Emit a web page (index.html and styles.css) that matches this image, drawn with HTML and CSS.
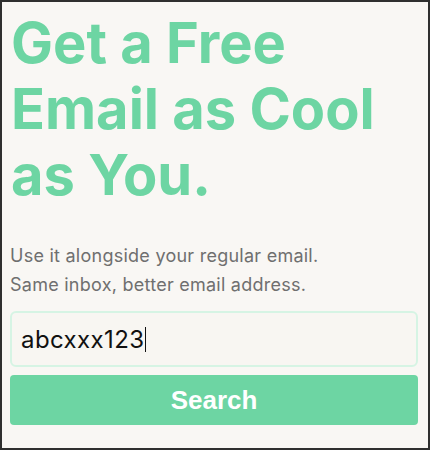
FILE: index.html
```html
<!DOCTYPE html>
<html lang="en">
<head>
  <meta charset="UTF-8">
  <meta name="viewport" content="width=device-width, initial-scale=1.0">
  <title>Free Email</title>
  <link rel="stylesheet" href="styles.css">
</head>
<body>
  <div class="frame">
    <h1>Get a Free Email as Cool as You.</h1>
    <p class="lead">Use it alongside your regular email.<br>Same inbox, better email address.</p>
    <form class="search-form">
      <div class="field">
        <span class="value">abcxxx123</span><span class="caret"></span>
      </div>
      <button type="button">Search</button>
    </form>
  </div>
</body>
</html>
```

FILE: styles.css
```css
/* Reset and Base Styles */
* {
  margin: 0;
  padding: 0;
  box-sizing: border-box;
}

body {
  font-family: 'Inter', 'Liberation Sans', sans-serif;
  background-color: #2b2b2b;
  width: 430px;
  height: 450px;
}

/* Frame */
.frame {
  width: 430px;
  height: 450px;
  background: #f9f7f4;
  border: 2px solid #2f2f2f;
  padding: 8px 10px 0 8px;
}

.frame h1 {
  font-size: 56px;
  font-weight: 700;
  line-height: 66px;
  color: #6dd5a3;
  padding-left: 1px;
}

.lead {
  margin-top: 33px;
  font-size: 18px;
  line-height: 29px;
  letter-spacing: 0.25px;
  color: #6f6f6f;
}

/* Form */
.search-form {
  margin-top: 12px;
}

.field {
  height: 56px;
  border: 2px solid #d6f4e4;
  border-radius: 6px;
  background: #f8f6f2;
  display: flex;
  align-items: center;
  padding-left: 9px;
  margin-bottom: 8px;
}

.value {
  font-size: 24px;
  letter-spacing: 0.4px;
  color: #111;
}

.caret {
  width: 1px;
  height: 25px;
  background: #111;
  margin-left: 1px;
}

button {
  width: 100%;
  height: 50px;
  background: #6dd5a3;
  color: #fff;
  border: none;
  border-radius: 4px;
  font-family: 'Liberation Sans', Arial, sans-serif;
  font-size: 26px;
  font-weight: 700;
}
```
